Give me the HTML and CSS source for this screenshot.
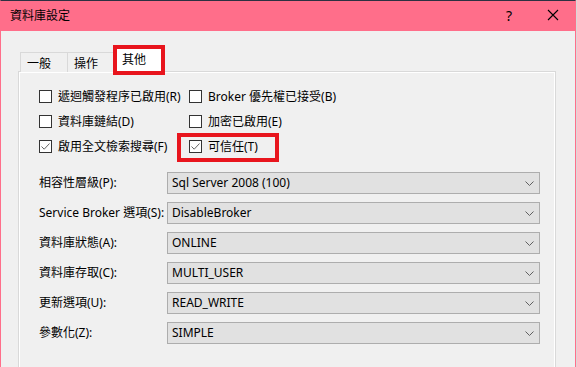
FILE: index.html
```html
<!DOCTYPE html>
<html lang="zh-Hant">
	<head>
		<meta charset="UTF-8" />
		<title>資料庫設定</title>
		<link rel="stylesheet" href="styles.css">
	</head>
	<body>
		<div class="window">
			<div class="titlebar">
				<span class="title">資料庫設定</span>
				<div class="controls">
					<span class="ctrl help">?</span>
					<span class="ctrl close">
						<svg width="12" height="12" viewBox="0 0 12 12">
							<path d="M1 1 L11 11 M11 1 L1 11" stroke="#000" stroke-width="1.1" fill="none" />
						</svg>
					</span>
				</div>
			</div>

			<div class="dialog-body">
				<div class="tabs">
					<div class="tab tab-general">一般</div>
					<div class="tab tab-ops">操作</div>
					<div class="tab tab-other active">
						其他
						<span class="mark mark-tab"></span>
					</div>
				</div>

				<div class="panel">
					<div class="options">
						<label class="check">
							<span class="box"></span>
							<span>遞迴觸發程序已啟用(R)</span>
						</label>
						<label class="check">
							<span class="box"></span>
							<span>Broker 優先權已接受(B)</span>
						</label>
						<label class="check">
							<span class="box"></span>
							<span>資料庫鏈結(D)</span>
						</label>
						<label class="check">
							<span class="box"></span>
							<span>加密已啟用(E)</span>
						</label>
						<label class="check">
							<span class="box checked">
								<svg width="11" height="11" viewBox="0 0 11 11">
									<path d="M1.5 5.5 L4.2 8.2 L9.5 2.5" stroke="#666" stroke-width="1" fill="none" />
								</svg>
							</span>
							<span>啟用全文檢索搜尋(F)</span>
						</label>
						<label class="check trusted">
							<span class="box checked">
								<svg width="11" height="11" viewBox="0 0 11 11">
									<path d="M1.5 5.5 L4.2 8.2 L9.5 2.5" stroke="#666" stroke-width="1" fill="none" />
								</svg>
							</span>
							<span>可信任(T)</span>
							<span class="mark mark-trusted"></span>
						</label>
					</div>

					<div class="fields">
						<div class="field">
							<span class="field-label">相容性層級(P):</span>
							<div class="select"><span>Sql Server 2008 (100)</span><svg class="chev" width="9" height="5" viewBox="0 0 9 5"><path d="M0.5 0.5 L4.5 4.5 L8.5 0.5" stroke="#606060" fill="none" /></svg></div>
						</div>
						<div class="field">
							<span class="field-label">Service Broker 選項(S):</span>
							<div class="select"><span>DisableBroker</span><svg class="chev" width="9" height="5" viewBox="0 0 9 5"><path d="M0.5 0.5 L4.5 4.5 L8.5 0.5" stroke="#606060" fill="none" /></svg></div>
						</div>
						<div class="field">
							<span class="field-label">資料庫狀態(A):</span>
							<div class="select"><span>ONLINE</span><svg class="chev" width="9" height="5" viewBox="0 0 9 5"><path d="M0.5 0.5 L4.5 4.5 L8.5 0.5" stroke="#606060" fill="none" /></svg></div>
						</div>
						<div class="field">
							<span class="field-label">資料庫存取(C):</span>
							<div class="select"><span>MULTI_USER</span><svg class="chev" width="9" height="5" viewBox="0 0 9 5"><path d="M0.5 0.5 L4.5 4.5 L8.5 0.5" stroke="#606060" fill="none" /></svg></div>
						</div>
						<div class="field">
							<span class="field-label">更新選項(U):</span>
							<div class="select"><span>READ_WRITE</span><svg class="chev" width="9" height="5" viewBox="0 0 9 5"><path d="M0.5 0.5 L4.5 4.5 L8.5 0.5" stroke="#606060" fill="none" /></svg></div>
						</div>
						<div class="field">
							<span class="field-label">參數化(Z):</span>
							<div class="select"><span>SIMPLE</span><svg class="chev" width="9" height="5" viewBox="0 0 9 5"><path d="M0.5 0.5 L4.5 4.5 L8.5 0.5" stroke="#606060" fill="none" /></svg></div>
						</div>
					</div>
				</div>
			</div>
		</div>
	</body>
</html>
```

FILE: styles.css
```css
body {
	margin: 0;
	width: 577px;
	height: 367px;
	overflow: hidden;
	background-color: #d8d8d8;
	font-family: "Noto Sans", "Noto Sans CJK TC", sans-serif;
	font-size: 12px;
	color: #000;
}

.window {
	box-sizing: border-box;
	width: 576px;
	height: 367px;
	border-top: 1px solid #2d3142;
	border-left: 1px solid #ff6e8a;
	border-right: 1px solid #ff6e8a;
	background-color: #f0f0f0;
	overflow: hidden;
}

.titlebar {
	height: 30px;
	display: flex;
	align-items: center;
	justify-content: space-between;
	padding-left: 9px;
	background-color: #ff6e8a;
}

.title {
	line-height: 16px;
	margin-top: -1px;
}

.controls {
	display: flex;
	height: 100%;
}

.ctrl {
	width: 44px;
	display: flex;
	align-items: center;
	justify-content: center;
}

.help {
	font-size: 14px;
	margin-top: -2px;
}

.close {
	margin-top: -2px;
}

.dialog-body {
	padding: 15px 0 0 17px;
}

.tabs {
	display: flex;
	align-items: flex-end;
	height: 26px;
	margin-bottom: -1px;
	padding-left: 2px;
}

.tab {
	box-sizing: border-box;
	height: 20px;
	padding-top: 3px;
	line-height: 16px;
	border: 1px solid #d9d9d9;
	border-bottom: none;
	background-color: #f0f0f0;
}

.tab-general {
	width: 48px;
	padding-left: 6px;
}

.tab-ops {
	width: 46px;
	padding-left: 6px;
	border-left: none;
}

.tab-other {
	width: 52px;
	margin-left: -1px;
	padding-left: 8px;
}

.tab.active {
	position: relative;
	z-index: 1;
	height: 26px;
	padding-top: 5px;
	background-color: #fff;
}

.mark {
	position: absolute;
	box-sizing: border-box;
	border: 4px solid #e8151d;
	pointer-events: none;
}

.mark-tab {
	left: -1px;
	top: -2px;
	width: 52px;
	height: 30px;
}

.panel {
	box-sizing: border-box;
	width: 538px;
	height: 320px;
	border: 1px solid #d9d9d9;
	box-shadow: inset 0 0 0 1px #fff;
	padding: 18px 0 0 20px;
}

.options {
	display: grid;
	grid-template-columns: 150px auto;
	row-gap: 12px;
}

.check {
	position: relative;
	display: flex;
	align-items: center;
	gap: 6px;
	height: 13px;
	line-height: 16px;
	white-space: nowrap;
}

.box {
	box-sizing: border-box;
	width: 13px;
	height: 13px;
	border: 1px solid #333;
	background-color: #fff;
	display: flex;
	align-items: center;
	justify-content: center;
	flex-shrink: 0;
}

.trusted {
	justify-self: start;
}

.mark-trusted {
	left: -12px;
	top: -7px;
	width: 102px;
	height: 29px;
}

.fields {
	display: flex;
	flex-direction: column;
	gap: 8px;
	margin-top: 19px;
}

.field {
	display: flex;
	align-items: center;
	height: 22px;
}

.field-label {
	width: 128px;
	flex-shrink: 0;
	line-height: 16px;
	white-space: nowrap;
}

.select {
	box-sizing: border-box;
	width: 373px;
	height: 22px;
	display: flex;
	align-items: center;
	justify-content: space-between;
	padding: 0 5px 0 4px;
	border: 1px solid #adadad;
	background-color: #e1e1e1;
	line-height: 16px;
}

.chev {
	margin-top: 1px;
}
```
